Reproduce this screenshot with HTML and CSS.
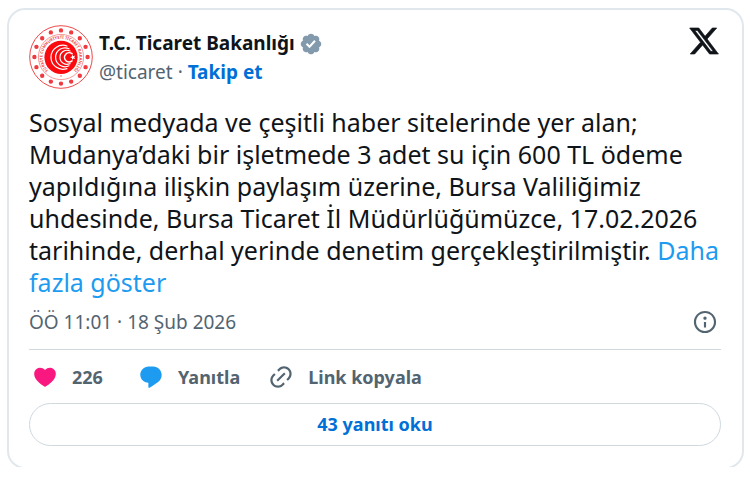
FILE: index.html
```
<!DOCTYPE html>
<html lang="tr">
<head>
  <meta charset="UTF-8">
  <meta name="viewport" content="width=device-width, initial-scale=1">
  <title>T.C. Ticaret Bakanlığı</title>
  <link rel="stylesheet" href="styles.css">
</head>
<body>
  <article class="tweet">
    <!-- Header -->
    <header class="tweet-header">
      <svg class="avatar" viewBox="0 0 64 64" aria-hidden="true">
        <defs>
          <path id="ring" d="M19.5 45.5 A18.4 18.4 0 1 1 44.5 45.5"/>
        </defs>
        <circle cx="32" cy="32" r="31.3" fill="#fff" stroke="#ee4a4a" stroke-width="1"/>
        <circle cx="32" cy="32" r="22.6" fill="none" stroke="#f28080" stroke-width=".8"/>
        <!-- Outer dots -->
        <circle cx="32" cy="32" r="26.6" fill="none" stroke="#ee3a40" stroke-width="4.4" stroke-linecap="round" pathLength="160" stroke-dasharray="0 10"/>
        <text class="ring-text"><textPath href="#ring">TÜRKİYE CUMHURİYETİ TİCARET BAKANLIĞI</textPath></text>
        <circle cx="32" cy="51" r=".7" fill="#ee4a4a"/>
        <circle cx="32" cy="32.3" r="16.6" fill="#fa0a0e"/>
        <!-- Crescents -->
        <g fill="none" stroke="#fff" stroke-linecap="round">
          <path d="M38 21 A12 12 0 1 0 38 43.6" stroke-width="1.2"/>
          <path d="M40 23.8 A9.4 9.4 0 1 0 40 40.8" stroke-width="1.2"/>
          <path d="M41 26 A7 7 0 1 0 41 38.6" stroke-width="1.2"/>
          <path d="M43 28.7 A4.6 4.6 0 1 0 43 35.9" stroke-width="1.6"/>
        </g>
        <path d="M41 32.3l2-.7v-2.1l1.3 1.7 2-.7-1.2 1.8 1.2 1.7-2-.6-1.3 1.7v-2.1z" fill="#fff"/>
      </svg>
      <div class="author">
        <div class="author-name">
          <span>T.C. Ticaret Bakanlığı</span>
          <svg class="badge" viewBox="0 0 22 22" aria-label="Onaylı hesap">
            <path fill="#829aab" d="M20.396 11c-.018-.646-.215-1.275-.57-1.816-.354-.54-.852-.972-1.438-1.246.223-.607.27-1.264.14-1.897-.131-.634-.437-1.218-.882-1.687-.47-.445-1.053-.75-1.687-.882-.633-.13-1.29-.083-1.897.14-.273-.587-.704-1.086-1.245-1.44S11.647 1.62 11 1.604c-.646.017-1.273.213-1.813.568s-.969.854-1.24 1.44c-.608-.223-1.267-.272-1.902-.14-.635.13-1.22.436-1.69.882-.445.47-.749 1.055-.878 1.688-.13.633-.08 1.29.144 1.896-.587.274-1.087.705-1.443 1.245-.356.54-.555 1.17-.574 1.817.02.647.218 1.276.574 1.817.356.54.856.972 1.443 1.245-.224.606-.274 1.263-.144 1.896.13.634.433 1.218.877 1.688.47.443 1.054.747 1.687.878.633.132 1.29.084 1.897-.136.274.586.705 1.084 1.246 1.439.54.354 1.17.551 1.816.569.647-.016 1.276-.213 1.817-.567s.972-.854 1.245-1.44c.604.239 1.266.296 1.903.164.636-.132 1.22-.447 1.68-.907.46-.46.776-1.044.908-1.681s.075-1.299-.165-1.903c.586-.274 1.084-.705 1.439-1.246.354-.54.551-1.17.569-1.816z"/>
            <path fill="#fff" d="M9.662 14.85l-3.429-3.428 1.293-1.302 2.072 2.072 4.4-4.794 1.347 1.246z"/>
          </svg>
        </div>
        <div class="author-handle">
          <a class="handle" href="#">@ticaret</a>
          <span>·</span>
          <a class="follow" href="#">Takip et</a>
        </div>
      </div>
      <a class="x-logo" href="#" aria-label="X">
        <svg viewBox="0 0 24 24">
          <path d="M18.244 2.25h3.308l-7.227 8.26 8.502 11.24H16.17l-5.214-6.817L4.99 21.75H1.68l7.73-8.835L1.254 2.25H8.08l4.713 6.231zm-1.161 17.52h1.833L7.084 4.126H5.117z"/>
        </svg>
      </a>
    </header>

    <!-- Tweet text -->
    <p class="tweet-text">Sosyal medyada ve çeşitli haber sitelerinde yer alan; Mudanya’daki bir işletmede 3 adet su için 600 TL ödeme yapıldığına ilişkin paylaşım üzerine, Bursa Valiliğimiz uhdesinde, Bursa Ticaret İl Müdürlüğümüzce, 17.02.2026 tarihinde, derhal yerinde denetim gerçekleştirilmiştir. <a href="#">Daha fazla göster</a></p>

    <div class="tweet-info">
      <time datetime="2026-02-18T11:01">ÖÖ 11:01 · 18 Şub 2026</time>
      <a class="info-link" href="#" aria-label="Bilgi">
        <svg class="icon" viewBox="0 0 24 24">
          <path d="M13.5 8.5c0 .83-.67 1.5-1.5 1.5s-1.5-.67-1.5-1.5S11.17 7 12 7s1.5.67 1.5 1.5zM13 17v-5h-2v5h2zm-1 5.25c5.66 0 10.25-4.59 10.25-10.25S17.66 1.75 12 1.75 1.75 6.34 1.75 12 6.34 22.25 12 22.25zM20.25 12c0 4.56-3.69 8.25-8.25 8.25S3.75 16.56 3.75 12 7.44 3.75 12 3.75s8.25 3.69 8.25 8.25z"/>
        </svg>
      </a>
    </div>

    <!-- Actions -->
    <div class="actions">
      <button class="action like" type="button">
        <svg class="icon" viewBox="0 0 24 24">
          <path d="M20.884 13.19c-1.351 2.48-4.001 5.12-8.379 7.67l-.503.3-.504-.3c-4.379-2.55-7.029-5.19-8.382-7.67-1.36-2.5-1.41-4.86-.514-6.67.887-1.79 2.647-2.91 4.601-3.01 1.651-.09 3.368.56 4.798 2.01 1.429-1.45 3.146-2.1 4.796-2.01 1.954.1 3.714 1.22 4.601 3.01.896 1.81.846 4.17-.514 6.67z"/>
        </svg>
        <span>226</span>
      </button>
      <button class="action reply" type="button">
        <svg class="icon" viewBox="0 0 24 24">
          <path d="M14.046 2.242l-4.148-.01h-.002c-4.374 0-7.8 3.427-7.8 7.802 0 4.098 3.186 7.206 7.465 7.37v3.828c0 .108.045.286.12.403.143.225.385.347.633.347.138 0 .277-.038.402-.118.264-.168 6.473-4.14 8.088-5.506 1.902-1.61 3.04-3.97 3.043-6.312v-.017c-.006-4.368-3.43-7.788-7.8-7.79z"/>
        </svg>
        <span>Yanıtla</span>
      </button>
      <button class="action copy" type="button">
        <svg class="icon" viewBox="0 0 24 24">
          <path d="M18.36 5.64c-1.95-1.96-5.11-1.96-7.07 0L9.88 7.05 8.46 5.64l1.42-1.42c2.73-2.73 7.16-2.73 9.9 0 2.73 2.74 2.73 7.17 0 9.9l-1.42 1.42-1.41-1.42 1.41-1.41c1.96-1.96 1.96-5.12 0-7.07zm-2.12 3.53l-7.07 7.07-1.41-1.41 7.07-7.07 1.41 1.41zm-12.02.71l1.42-1.42 1.41 1.42-1.41 1.41c-1.96 1.96-1.96 5.12 0 7.07 1.95 1.96 5.11 1.96 7.07 0l1.41-1.41 1.42 1.41-1.42 1.42c-2.73 2.73-7.16 2.73-9.9 0-2.73-2.74-2.73-7.17 0-9.9z"/>
        </svg>
        <span>Link kopyala</span>
      </button>
    </div>

    <button class="read-replies" type="button">43 yanıtı oku</button>
  </article>
</body>
</html>
```

FILE: styles.css
```
* { margin: 0; padding: 0; box-sizing: border-box; }

body {
  background: #fff;
  color: #0f1419;
  font-family: "Segoe UI", "Noto Sans", sans-serif;
  font-size: 19px;
  padding: 8px 6px 8px 7px;
}

a {
  color: inherit;
  text-decoration: none;
}
a:hover { text-decoration: underline; }

button {
  font: inherit;
  background: none;
  border: none;
  cursor: pointer;
}

.tweet {
  border: 2px solid #e1e8ed;
  border-radius: 18px;
  padding: 15px 21px 21px 20px;
  clip-path: inset(0 0 2px 0);
}

/* Header */
.tweet-header {
  display: flex;
  align-items: flex-start;
}
.avatar {
  width: 64px;
  height: 64px;
  margin-right: 6px;
}
.ring-text {
  font-size: 4px;
  font-weight: bold;
  fill: #ee4a4a;
}
.author {
  flex: 1;
  padding-top: 4px;
  line-height: 29px;
}
.author-name {
  display: flex;
  align-items: center;
  gap: 4px;
  font-weight: 700;
}
.badge {
  width: 24px;
  height: 24px;
}
.author-handle { color: #536471; }
.follow {
  color: #006fd6;
  font-weight: 700;
}
.x-logo { padding-right: 1px; }
.x-logo svg {
  display: block;
  width: 32px;
  height: 32px;
  fill: #0f1419;
  stroke: #0f1419;
  stroke-width: .5;
}

/* Text */
.tweet-text {
  margin-top: 17px;
  font-size: 25px;
  line-height: 32px;
}
.tweet-text a { color: #1d9bf0; }

.icon {
  display: block;
  width: 26px;
  height: 26px;
  fill: currentColor;
}
.tweet-info {
  display: flex;
  align-items: center;
  justify-content: space-between;
  padding: 10px 3px 13px 0;
  line-height: 28px;
  color: #536471;
  border-bottom: 1px solid #cfd9de;
}

/* Actions */
.actions {
  display: flex;
  gap: 28px;
  padding: 13px 3px 12px;
}
.action {
  display: flex;
  align-items: center;
  gap: 14px;
  min-width: 78px;
  font-size: 18px;
  line-height: 28px;
  font-weight: 700;
  color: #536471;
}
.like .icon { color: #f91880; }
.reply .icon { color: #1d9bf0; }

.read-replies {
  display: block;
  width: 100%;
  border: 1px solid #cfd9de;
  border-radius: 22px;
  font-size: 18px;
  line-height: 41px;
  font-weight: 700;
  color: #006fd6;
}
```
